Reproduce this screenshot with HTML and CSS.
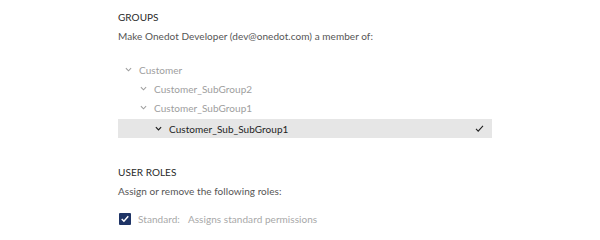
FILE: index.html
```html
<!DOCTYPE html>
<html>
<head>
<meta charset="utf-8">
<link rel="stylesheet" href="styles.css">
</head>
<body>
<div class="page">
  <section class="groups">
    <div class="heading">GROUPS</div>
    <div class="sub">Make Onedot Developer (dev@onedot.com) a member of:</div>
    <ul class="tree">
      <li class="node lvl1"><svg class="chev" viewBox="0 0 8 5"><path d="M1 1l3 3 3-3" fill="none" stroke="currentColor" stroke-width="1.2"/></svg><span>Customer</span></li>
      <li class="node lvl2"><svg class="chev" viewBox="0 0 8 5"><path d="M1 1l3 3 3-3" fill="none" stroke="currentColor" stroke-width="1.2"/></svg><span>Customer_SubGroup2</span></li>
      <li class="node lvl2"><svg class="chev" viewBox="0 0 8 5"><path d="M1 1l3 3 3-3" fill="none" stroke="currentColor" stroke-width="1.2"/></svg><span>Customer_SubGroup1</span></li>
      <li class="node lvl3 selected"><svg class="chev" viewBox="0 0 8 5"><path d="M1 1l3 3 3-3" fill="none" stroke="currentColor" stroke-width="1.4"/></svg><span class="label">Customer_Sub_SubGroup1</span><svg class="check" viewBox="0 0 10 8"><path d="M1 4.5l2.5 2.5 5.5-6" fill="none" stroke="currentColor" stroke-width="1.2"/></svg></li>
    </ul>
  </section>
  <section class="roles">
    <div class="heading">USER ROLES</div>
    <div class="sub">Assign or remove the following roles:</div>
    <label class="role">
      <span class="box"><svg viewBox="0 0 11 11"><path d="M2.5 5.5l2 2 4-4.5" fill="none" stroke="#fff" stroke-width="1.4"/></svg></span>
      <span class="role-name">Standard:</span>
      <span class="role-desc">Assigns standard permissions</span>
    </label>
  </section>
</div>
</body>
</html>
```
FILE: styles.css
```css
* { box-sizing: border-box; }
body {
  margin: 0;
  background: #fff;
  font-family: Lato, "Open Sans", sans-serif;
  font-size: 10px;
  letter-spacing: 0.05px;
  color: #333;
}
.page {
  padding: 8px 0 0 118px;
  width: 492px;
}
.heading {
  line-height: 19px;
  color: #2a2a2a;
}
.sub {
  line-height: 19px;
  color: #555;
}
.tree {
  list-style: none;
  margin: 14px 0 0;
  padding: 0;
}
.node {
  display: flex;
  align-items: center;
  height: 19px;
  color: #9e9e9e;
}
.lvl1 { padding-left: 7px; }
.lvl2 { padding-left: 22px; }
.lvl3 { padding-left: 37px; }
.chev {
  width: 7px;
  height: 5px;
  margin-right: 7px;
  flex: none;
}
.selected {
  margin-top: 2px;
  background: #e6e6e6;
  color: #1e1e1e;
  padding-right: 8px;
}
.selected .label { flex: 1; }
.check {
  width: 9px;
  height: 7px;
}
.roles {
  margin-top: 25px;
}
.role {
  display: flex;
  align-items: center;
  height: 19px;
  margin-top: 8px;
  color: #a8a8a8;
}
.box {
  width: 12px;
  height: 12px;
  background: #1f3466;
  border-radius: 1px;
  margin: 0 7px 0 1px;
  display: flex;
}
.box svg { width: 12px; height: 12px; }
.role-name { margin-right: 8px; }
```
